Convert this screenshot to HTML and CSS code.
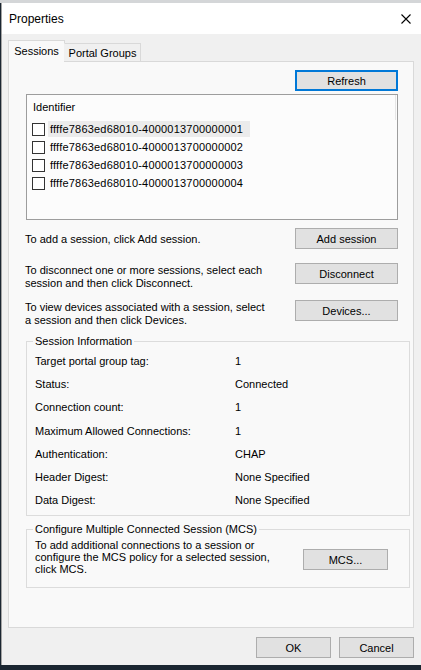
FILE: index.html
```html
<!DOCTYPE html>
<html>
<head>
<meta charset="utf-8">
<title>Properties</title>
<link rel="stylesheet" href="styles.css">
</head>
<body>
<div class="desk"></div>
<div class="window">
  <div class="titlebar">
    <span class="title">Properties</span>
    <svg class="close" width="10" height="10" viewBox="0 0 10 10"><path d="M0.5 0.5 L9.5 9.5 M9.5 0.5 L0.5 9.5" stroke="#000" stroke-width="1.1" fill="none"/></svg>
  </div>
  <div class="dialog">
    <div class="tabs">
      <div class="tab active">Sessions</div>
      <div class="tab inactive">Portal Groups</div>
    </div>
    <div class="panel">
      <div class="refresh-row"><button class="btn default">Refresh</button></div>
      <div class="listbox">
        <div class="list-header">Identifier</div>
        <div class="list-row"><span class="cb"></span><span class="lbl hot">ffffe7863ed68010-4000013700000001</span></div>
        <div class="list-row"><span class="cb"></span><span class="lbl">ffffe7863ed68010-4000013700000002</span></div>
        <div class="list-row"><span class="cb"></span><span class="lbl">ffffe7863ed68010-4000013700000003</span></div>
        <div class="list-row"><span class="cb"></span><span class="lbl">ffffe7863ed68010-4000013700000004</span></div>
      </div>
      <div class="action add">
        <p class="desc">To add a session, click Add session.</p>
        <button class="btn">Add session</button>
      </div>
      <div class="action disc">
        <p class="desc">To disconnect one or more sessions, select each<br>session and then click Disconnect.</p>
        <button class="btn">Disconnect</button>
      </div>
      <div class="action dev">
        <p class="desc">To view devices associated with a session, select<br>a session and then click Devices.</p>
        <button class="btn">Devices...</button>
      </div>
      <fieldset class="group info">
        <legend>Session Information</legend>
        <div class="info-grid">
          <span>Target portal group tag:</span><span>1</span>
          <span>Status:</span><span>Connected</span>
          <span>Connection count:</span><span>1</span>
          <span>Maximum Allowed Connections:</span><span>1</span>
          <span>Authentication:</span><span>CHAP</span>
          <span>Header Digest:</span><span>None Specified</span>
          <span>Data Digest:</span><span>None Specified</span>
        </div>
      </fieldset>
      <fieldset class="group mcs">
        <legend>Configure Multiple Connected Session (MCS)</legend>
        <div class="mcs-row">
          <p class="mcs-text">To add additional connections to a session or<br>configure the MCS policy for a selected session,<br>click MCS.</p>
          <button class="btn mcs-btn">MCS...</button>
        </div>
      </fieldset>
    </div>
    <div class="footer">
      <button class="btn small">OK</button>
      <button class="btn small">Cancel</button>
    </div>
  </div>
</div>
</body>
</html>
```
FILE: styles.css
```css
html, body {
  margin: 0;
  padding: 0;
}
body {
  width: 421px;
  height: 670px;
  overflow: hidden;
  background: #1b2631;
  font-family: "Liberation Sans", Arial, sans-serif;
  font-size: 11px;
  color: #000;
}
.desk {
  height: 3px;
  background: #d4d6d8;
}
.window {
  margin-left: 1px;
  width: 420px;
  height: 662px;
  border-left: 1px solid #a3a3a3;
  box-sizing: border-box;
  display: flex;
  flex-direction: column;
  overflow: hidden;
}
.titlebar {
  height: 31px;
  flex-shrink: 0;
  background: #fff;
  display: flex;
  align-items: center;
  justify-content: space-between;
  padding: 0 10px 0 7px;
}
.title {
  font-size: 12px;
}
.close {
  display: block;
}
.dialog {
  flex: 1;
  background: #f0f0f0;
  padding: 6px 7px 0 6px;
}
.tabs {
  display: flex;
  align-items: flex-end;
  height: 22px;
  margin-bottom: -1px;
  position: relative;
  z-index: 1;
}
.tab {
  box-sizing: border-box;
  border: 1px solid #d9d9d9;
  border-bottom: none;
  text-align: center;
}
.tab.active {
  width: 57px;
  height: 22px;
  line-height: 21px;
  background: #f9f9f9;
}
.tab.inactive {
  width: 77px;
  height: 18px;
  line-height: 18px;
  margin-left: -1px;
  margin-bottom: 1px;
  background: #f0f0f0;
  border-left-color: #f0f0f0;
}
.panel {
  height: 567px;
  box-sizing: border-box;
  border: 1px solid #d9d9d9;
  background: #f9f9f9;
  padding: 0 3px 0 17px;
}
.refresh-row {
  width: 372px;
  display: flex;
  justify-content: flex-end;
  margin-top: 8px;
}
.btn {
  width: 103px;
  height: 21px;
  box-sizing: border-box;
  background: #e1e1e1;
  border: 1px solid #adadad;
  border-radius: 0;
  padding: 0;
  margin: 0;
  font: inherit;
  color: #000;
}
.btn.default {
  border: 2px solid #0078d7;
}
.listbox {
  width: 372px;
  height: 126px;
  box-sizing: border-box;
  margin-top: 3px;
  border: 1px solid #9d9d9d;
  background: #fcfcfc;
}
.list-header {
  width: 369px;
  height: 25px;
  line-height: 25px;
  box-sizing: border-box;
  padding-left: 6px;
  border-right: 1px solid #e6e6e6;
}
.list-row {
  height: 18px;
  display: flex;
  align-items: center;
  padding-left: 5px;
}
.cb {
  width: 13px;
  height: 13px;
  box-sizing: border-box;
  border: 1px solid #333;
  background: #fff;
  margin-right: 3px;
}
.lbl {
  height: 16px;
  line-height: 16px;
  padding: 0 7px 0 2px;
  letter-spacing: 0.2px;
}
.lbl.hot {
  background: #ebebeb;
}
.action {
  width: 372px;
  height: 21px;
  display: flex;
  justify-content: space-between;
  align-items: flex-start;
}
.action.add {
  margin-top: 8px;
  align-items: center;
}
.action.disc {
  margin-top: 14px;
}
.action.dev {
  margin-top: 16px;
}
.desc {
  margin: 1px 0 0 -1px;
  line-height: 13px;
}
.group {
  margin: 13px 0 0 0;
  border: 1px solid #dcdcdc;
  padding: 1px 8px 3px;
  min-width: 0;
}
.group legend {
  padding: 0 2px;
  margin-left: -2px;
  line-height: 14px;
}
.info-grid {
  display: grid;
  grid-template-columns: 200px 1fr;
  grid-auto-rows: 23.3px;
  align-items: center;
}
.group.mcs {
  margin-top: 6px;
  padding: 3px 8px 12px;
}
.mcs-row {
  display: flex;
  align-items: flex-start;
}
.mcs-text {
  width: 268px;
  margin: 0;
  line-height: 12px;
}
.mcs-btn {
  width: 85px;
  margin-top: 10px;
}
.footer {
  display: flex;
  justify-content: flex-end;
  gap: 8px;
  margin-top: 9px;
}
.btn.small {
  width: 75px;
}
```
